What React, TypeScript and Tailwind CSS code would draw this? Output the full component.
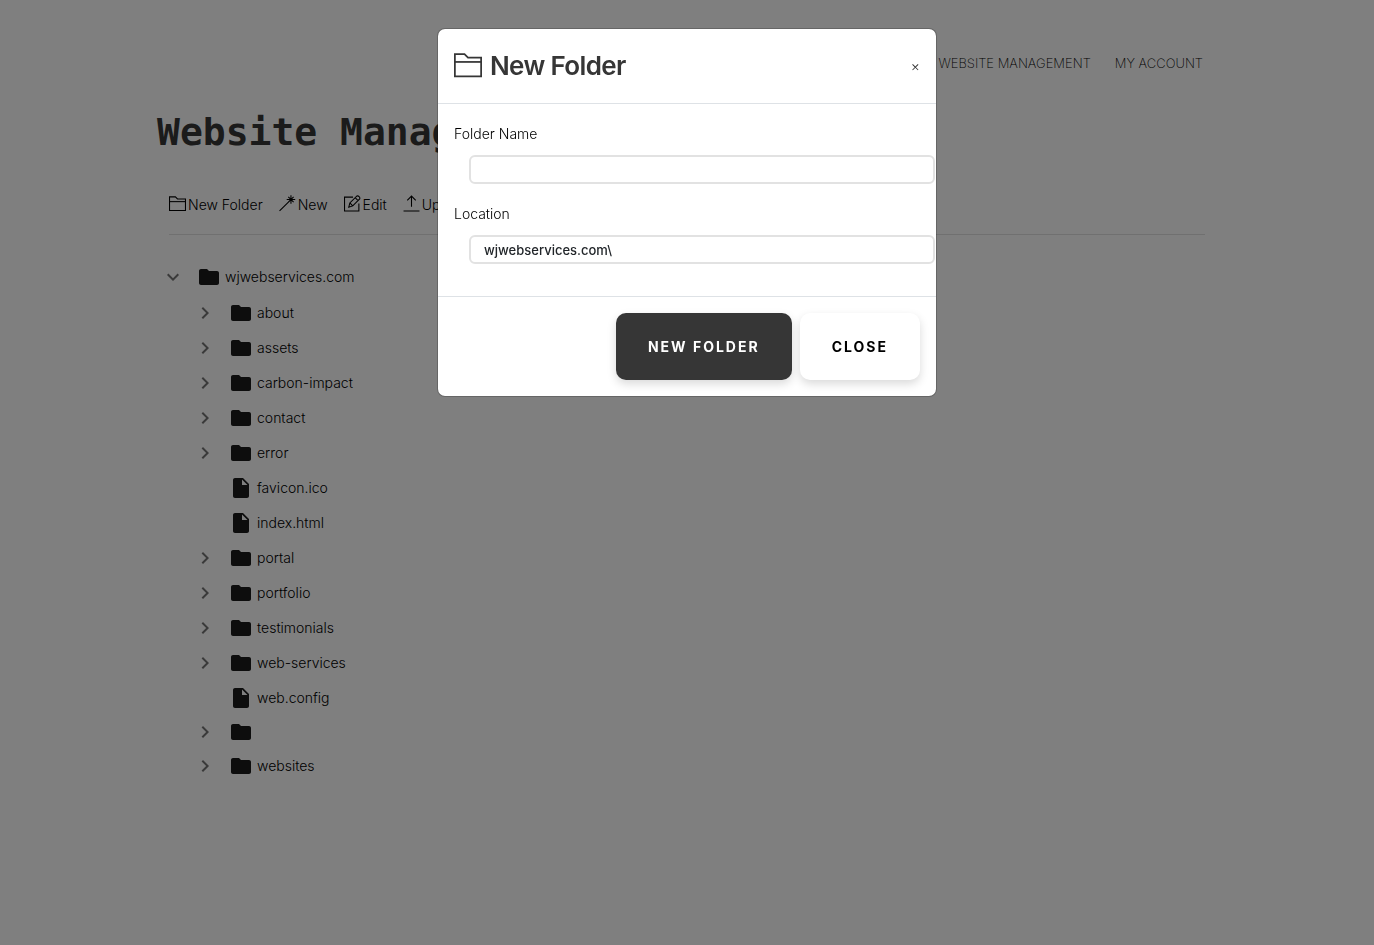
import { useState } from "react";
import type { ReactNode } from "react";

type Entry = { name: string; type: "folder" | "file" };

const entries: Entry[] = [
  { name: "about", type: "folder" },
  { name: "assets", type: "folder" },
  { name: "carbon-impact", type: "folder" },
  { name: "contact", type: "folder" },
  { name: "error", type: "folder" },
  { name: "favicon.ico", type: "file" },
  { name: "index.html", type: "file" },
  { name: "portal", type: "folder" },
  { name: "portfolio", type: "folder" },
  { name: "testimonials", type: "folder" },
  { name: "web-services", type: "folder" },
  { name: "web.config", type: "file" },
  { name: "", type: "folder" },
  { name: "websites", type: "folder" },
];

function LineIcon({ className, children }: { className: string; children: ReactNode }) {
  return (
    <svg
      className={className}
      viewBox="0 0 64 64"
      fill="none"
      stroke="currentColor"
      strokeWidth={4}
      strokeMiterlimit={10}
      aria-hidden="true"
    >
      {children}
    </svg>
  );
}

function FolderOutline() {
  return (
    <>
      <path d="M62 58H2V7h22l8 8h30z" />
      <path d="M2 25h60" />
    </>
  );
}

function SolidIcon({ d, className }: { d: string; className: string }) {
  return (
    <svg className={`size-6 shrink-0 ${className}`} viewBox="0 0 24 24" fill="currentColor" aria-hidden="true">
      <path d={d} />
    </svg>
  );
}

const paths = {
  folder: "M10 4H4c-1.1 0-1.99.9-1.99 2L2 18c0 1.1.9 2 2 2h16c1.1 0 2-.9 2-2V8c0-1.1-.9-2-2-2h-8l-2-2z",
  file: "M6 2c-1.1 0-1.99.9-1.99 2L4 20c0 1.1.89 2 1.99 2H18c1.1 0 2-.9 2-2V8l-6-6H6zm7 7V3.5L18.5 9H13z",
  right: "M10 6L8.59 7.41 13.17 12l-4.58 4.59L10 18l6-6z",
  down: "M16.59 8.59L12 13.17 7.41 8.59 6 10l6 6 6-6z",
};

function ToolButton({ label, children }: { label: string; children: ReactNode }) {
  return (
    <button type="button" className="flex items-center gap-0.5">
      <LineIcon className="mb-1 size-[17px]">{children}</LineIcon>
      {label}
    </button>
  );
}

function FileTree() {
  const [open, setOpen] = useState(true);

  return (
    <div className="mt-6 px-1">
      <div className="flex h-9 items-center">
        <button type="button" aria-label="Toggle wjwebservices.com" onClick={() => setOpen(!open)}>
          <SolidIcon d={open ? paths.down : paths.right} className="text-[#757575]" />
        </button>
        <SolidIcon d={paths.folder} className="ml-3 text-[#1a1a1a]" />
        <span className="ml-1 leading-7">wjwebservices.com</span>
      </div>
      {open && (
        <ul className="pl-8">
          {entries.map((entry, i) => (
            <li key={i} className={`flex items-center ${entry.name ? "h-[35px]" : "h-[33px]"}`}>
              {entry.type === "folder" ? (
                <button type="button" aria-label={`Expand ${entry.name}`}>
                  <SolidIcon d={paths.right} className="text-[#757575]" />
                </button>
              ) : (
                <span className="w-6" />
              )}
              <SolidIcon d={paths[entry.type]} className="ml-3 text-[#1a1a1a]" />
              <span className="ml-1 leading-7">{entry.name}</span>
            </li>
          ))}
        </ul>
      )}
    </div>
  );
}

function NewFolderModal({ onClose }: { onClose: () => void }) {
  const [folderName, setFolderName] = useState("");
  const inputClass =
    "ml-[15px] mt-[7px] block h-[29px] w-full rounded-md border-2 border-[#e2e2e2] bg-white px-[13px] text-[13px] font-medium text-[#212529]";
  const buttonClass =
    "rounded-[10px] px-8 py-5 text-sm leading-[27px] font-bold uppercase tracking-[2px] shadow-[0_4px_10px_rgba(0,0,0,0.15)]";

  return (
    <div className="fixed inset-0 bg-black/50 px-2 py-7">
      <div
        role="dialog"
        aria-modal="true"
        aria-labelledby="modal-title"
        className="mx-auto max-w-[500px] rounded-lg border border-black/20 bg-white bg-clip-padding"
      >
        <div className="flex items-center justify-between border-b border-[#dee2e6] p-4">
          <h2
            id="modal-title"
            className="flex items-center gap-2 text-[26px] leading-[42px] font-semibold tracking-tight text-[#363636]"
          >
            <LineIcon className="mb-0.5 size-7">
              <FolderOutline />
            </LineIcon>
            New Folder
          </h2>
          <button type="button" aria-label="Close dialog" className="text-sm text-[#333]" onClick={onClose}>
            ×
          </button>
        </div>

        <div className="px-4 pt-4 pb-8 leading-7">
          <label htmlFor="folder-name" className="block">
            Folder Name
          </label>
          <input
            id="folder-name"
            type="text"
            className={inputClass}
            value={folderName}
            onChange={(e) => setFolderName(e.target.value)}
          />
          <label htmlFor="location" className="mt-4 block">
            Location
          </label>
          <input id="location" type="text" className={inputClass} defaultValue={"wjwebservices.com\\"} />
        </div>

        <div className="flex justify-end gap-2 border-t border-[#dee2e6] p-4">
          <button type="button" className={`${buttonClass} bg-[#363636] text-white`}>
            New Folder
          </button>
          <button type="button" className={`${buttonClass} bg-white text-black`} onClick={onClose}>
            Close
          </button>
        </div>
      </div>
    </div>
  );
}

export default function App() {
  const [showModal, setShowModal] = useState(true);

  return (
    <div className="min-h-screen bg-white font-['Inter',sans-serif] text-sm font-light text-black">
      <div className="mx-auto max-w-[1060px]">
        <nav className="flex justify-end gap-6 px-3.5 pt-[50px] text-[13px] leading-[26px] font-extralight uppercase">
          <a href="#website">Website Management</a>
          <a href="#account">My Account</a>
        </nav>

        <h1 className="mt-7 font-['DejaVu_Sans_Mono',monospace] text-[38px] leading-[56px] font-bold text-[#363636]">
          Website Management
        </h1>

        <div className="mx-3 mt-[31px] flex gap-4 border-b border-[#e0e0e0] pb-[15px] leading-7">
          <ToolButton label="New Folder">
            <FolderOutline />
          </ToolButton>
          <ToolButton label="New">
            <path d="M2 60l43-43M45 1v32M29 17h32M35 7l20 20M55 7L35 27" />
          </ToolButton>
          <ToolButton label="Edit">
            <path d="M34 8H2v52h54V32" />
            <path d="M18 46l4-16L48 4c6-3 14 4 11 11L33 41zM42 10l11 11M22 30l11 11" />
          </ToolButton>
          <ToolButton label="Upload">
            <path d="M2 60h60M32 44V4M16 20L32 4l16 16" />
          </ToolButton>
        </div>

        <FileTree />
      </div>

      {showModal && <NewFolderModal onClose={() => setShowModal(false)} />}
    </div>
  );
}
